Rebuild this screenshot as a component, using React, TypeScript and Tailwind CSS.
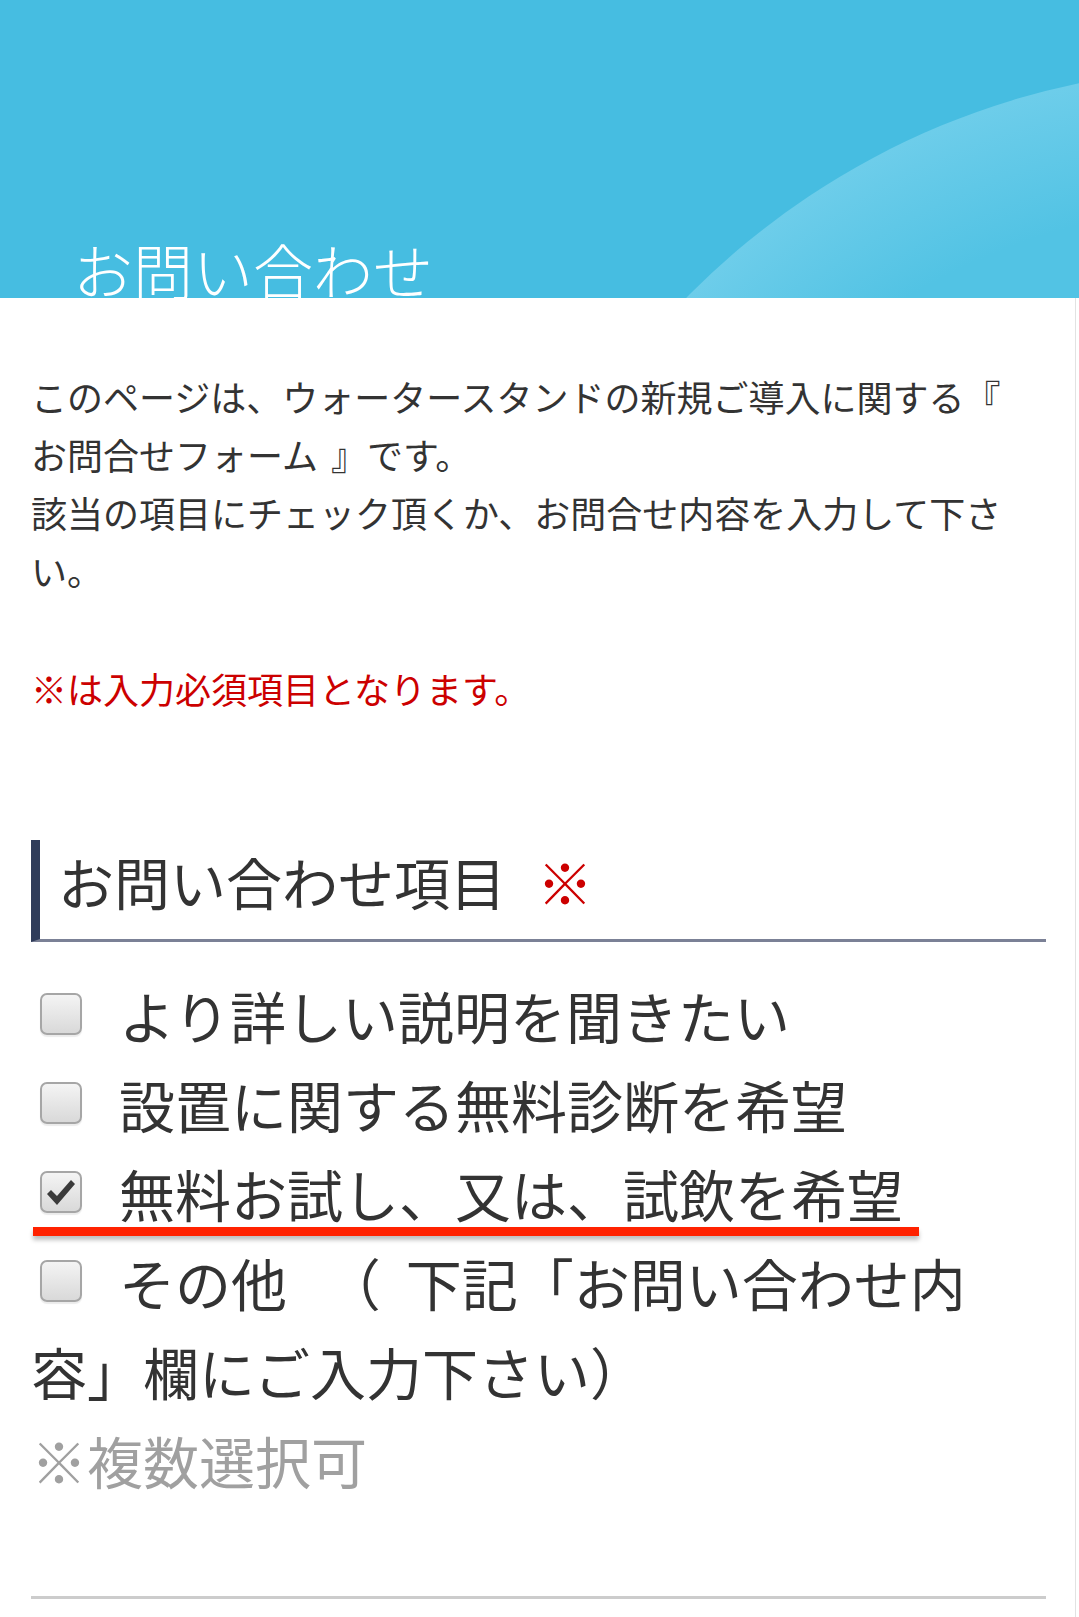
import React from 'react';

// Checkbox drawn like the old mobile Safari style
const Box = ({ checked = false }: { checked?: boolean }) => (
    <span className="relative ml-[9px] mr-[37px] inline-block h-[42px] w-[42px] rounded-[7px] border-2 border-[#a6a6a6] bg-linear-to-b from-[#f4f4f4] to-[#d9d9d9] align-[4px] shadow-[0_2px_1px_rgba(0,0,0,0.08)]">
        {checked && (
            <svg viewBox="0 0 28 25" className="absolute left-[5px] top-[7px] h-[25px] w-[28px]">
                <path d="M0 14 L4 10 L10 16 L24 0 L28 4 L10 25 Z" fill="#3b3b3b" />
            </svg>
        )}
    </span>
);

const items = [
    { label: 'より詳しい説明を聞きたい', checked: false },
    { label: '設置に関する無料診断を希望', checked: false },
    { label: '無料お試し、又は、試飲を希望', checked: true },
];

export default function App() {
    return (
        <div className="min-h-[1617px] bg-white font-['Noto_Sans_CJK_JP','Noto_Sans',sans-serif] text-[#333333]">
            {/* Header */}
            <header className="relative h-[298px] overflow-hidden bg-[#46bde1] pl-[73px] pt-[239px]">
                <div className="absolute left-[466px] top-[67px] h-[1540px] w-[1540px] rounded-full bg-[radial-gradient(circle_closest-side,#52c3e4_82%,#6dcdea_100%)]" />
                <h1 className="relative text-[60px] font-light leading-none text-white">お問い合わせ</h1>
            </header>

            <main className="mr-[3px] border-r border-[#e2e2e2] pb-[18px] pl-[31px] pr-[29px] pt-[69px]">
                <p className="pr-[20px] text-[36px] leading-[58px]">
                    このページは、ウォータースタンドの新規ご導入に関する『 お問合せフォーム
                    <span className="ml-[13px]">』です。</span>
                    <br />
                    該当の項目にチェック頂くか、お問合せ内容を入力して下さい。
                </p>
                <p className="mt-[60px] text-[36px] leading-[58px] text-[#cc0000]">※は入力必須項目となります。</p>

                {/* Inquiry items */}
                <section className="mt-[123px]">
                    <h2 className="border-b-[3px] border-l-[9px] border-b-[#7b8196] border-l-[#2f3c5a] pb-[17px] pl-[18px] text-[56px] font-normal leading-[82px]">
                        お問い合わせ項目<span className="ml-[31px] text-[#cc0000]">※</span>
                    </h2>

                    <div className="mt-[28px] pr-[30px] text-[56px] leading-[89px]">
                        {items.map((item) => (
                            <label key={item.label} className="relative block">
                                <Box checked={item.checked} />
                                {item.label}
                                {item.checked && (
                                    <span className="absolute bottom-[1px] left-[2px] h-[9px] w-[886px] bg-[#ff2200] shadow-[0_4px_4px_rgba(0,0,0,0.25)]" />
                                )}
                            </label>
                        ))}
                        <label className="block">
                            <Box />
                            その他{'\u00a0\u00a0\u00a0'}（{'\u00a0\u00a0'}下記「お問い合わせ内容」欄にご入力下さい）
                        </label>
                        <p className="text-[#a0a0a0]">※複数選択可</p>
                    </div>

                    <div className="mt-[92px] h-[3px] bg-[#cccccc]" />
                </section>
            </main>
        </div>
    );
}
